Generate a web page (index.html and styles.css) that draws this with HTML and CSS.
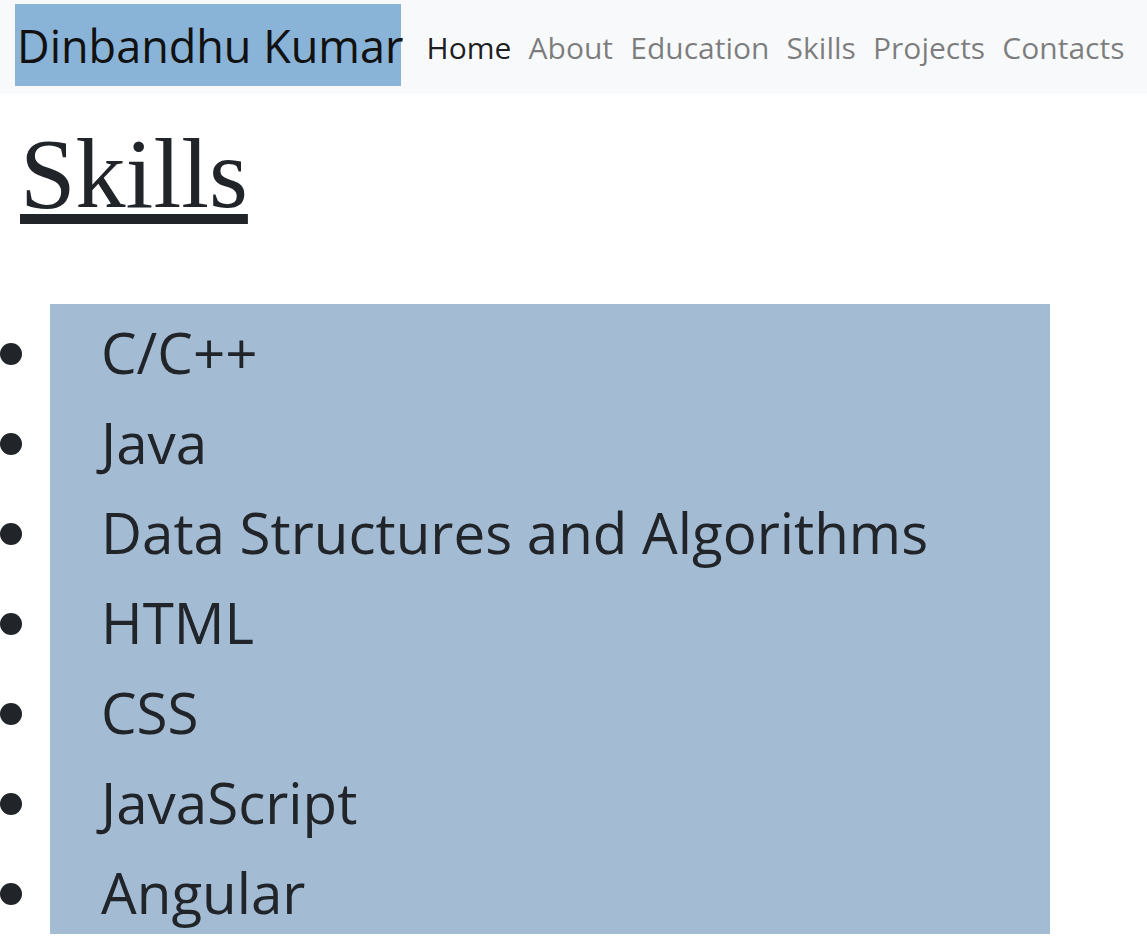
FILE: index.html
```html
<!DOCTYPE html>
<html lang="en">
<head>
<meta charset="utf-8">
<title>Dinbandhu Kumar - Skills</title>
<link rel="stylesheet" href="styles.css">
</head>
<body>
<nav class="navbar">
  <a class="brand" href="#">Dinbandhu Kumar</a>
  <ul class="nav-links">
    <li><a class="nav-link active" href="#">Home</a></li>
    <li><a class="nav-link" href="#">About</a></li>
    <li><a class="nav-link" href="#">Education</a></li>
    <li><a class="nav-link" href="#">Skills</a></li>
    <li><a class="nav-link" href="#">Projects</a></li>
    <li><a class="nav-link" href="#">Contacts</a></li>
  </ul>
</nav>
<main class="content">
  <h1 class="section-title">Skills</h1>
  <ul class="skills-list">
    <li>C/C++</li>
    <li>Java</li>
    <li>Data Structures and Algorithms</li>
    <li>HTML</li>
    <li>CSS</li>
    <li>JavaScript</li>
    <li>Angular</li>
  </ul>
</main>
</body>
</html>
```
FILE: styles.css
```css
html, body {
  margin: 0;
  padding: 0;
  background: #ffffff;
}
body {
  font-family: "Open Sans", "Noto Sans", sans-serif;
  color: #212529;
}
.navbar {
  display: flex;
  align-items: center;
  height: 94px;
  padding: 0 0 0 15px;
  background: #f8f9fa;
  box-sizing: border-box;
}
.brand {
  display: flex;
  align-items: center;
  height: 82px;
  width: 386px;
  box-sizing: border-box;
  padding-left: 2px;
  background: #89b3d7;
  color: #111111;
  text-decoration: none;
  font-size: 45px;
  white-space: nowrap;
  margin-top: -4px;
}
.nav-links {
  display: flex;
  list-style: none;
  margin: 0 0 0 17px;
  padding: 0;
  gap: 0;
}
.nav-link {
  display: block;
  padding: 0 8.6px;
  font-size: 30px;
  color: rgba(0, 0, 0, 0.5);
  text-decoration: none;
  white-space: nowrap;
}
.nav-link.active {
  color: rgba(0, 0, 0, 0.9);
}
.content {
  margin: 0;
}
.section-title {
  margin: 20px 0 0 20px;
  font-family: "Liberation Serif", "Times New Roman", serif;
  font-weight: 400;
  font-size: 100px;
  line-height: 120px;
  display: inline-block;
  text-decoration: underline;
  text-decoration-thickness: 10px;
  text-underline-offset: 7px;
  color: #212529;
}
.skills-list {
  list-style: none;
  margin: 70px 0 0 0;
  padding: 0 0 0 50px;
  width: 1000px;
}
.skills-list li {
  background: #a3bcd4;
  padding-left: 51px;
  padding-top: 4px;
  font-size: 56.5px;
  line-height: 90px;
  height: 86px;
  white-space: nowrap;
}
.skills-list li::before {
  content: "";
  display: inline-block;
  width: 22px;
  height: 22px;
  border-radius: 50%;
  background: #212529;
  margin-left: -101px;
  margin-right: 79px;
  vertical-align: 9px;
}
```
